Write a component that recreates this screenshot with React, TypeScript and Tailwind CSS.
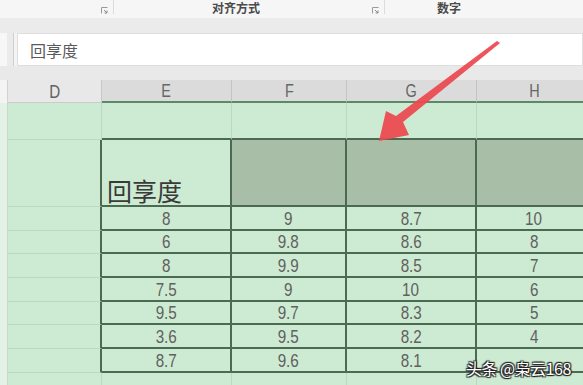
import React from "react";

const data: string[][] = [
  ["8", "9", "8.7", "10"],
  ["6", "9.8", "8.6", "8"],
  ["8", "9.9", "8.5", "7"],
  ["7.5", "9", "10", "6"],
  ["9.5", "9.7", "8.3", "5"],
  ["3.6", "9.5", "8.2", "4"],
  ["8.7", "9.6", "8.1", ""],
];
const heights = ["h-[24px]", "h-[23px]", "h-[24px]", "h-[24px]", "h-[23px]", "h-[24px]", "h-[24px]"];
const widths = ["w-[130px]", "w-[115px]", "w-[130px]", "w-[116px]"];

const font = { fontFamily: '"Liberation Sans", Arial, sans-serif' };
const cjk = { fontFamily: '"Noto Sans CJK SC", "Noto Sans", sans-serif' };

function Launcher() {
  return (
    <svg width="7" height="7" viewBox="0 0 7 7" className="block">
      <path d="M0.5 6.5V0.5H6.5" fill="none" stroke="#9a9a9a" strokeWidth="1" />
      <path d="M3 3L6 6M6 3.5V6H3.5" fill="none" stroke="#8a8a8a" strokeWidth="1" />
    </svg>
  );
}

function LeftStrip() {
  return <div className="w-[8px] shrink-0 bg-[#e4f1e6] border-r border-[#c6dacb]" />;
}

function Num({ v }: { v: string }) {
  return (
    <span className="inline-block scale-x-[0.8] text-[19px] leading-none text-[#606060]" style={font}>
      {v}
    </span>
  );
}

export default function App() {
  return (
    <div className="relative w-[583px] h-[385px] overflow-hidden bg-[#cdebd2]">
      {/* ribbon group labels */}
      <div className="flex h-[18px] bg-[#f6f6f6] overflow-hidden">
        <div className="w-[101px] shrink-0" />
        <div className="pt-[7px] w-[12px] shrink-0"><Launcher /></div>
        <div className="w-px h-[14px] bg-[#dcdcdc] shrink-0" />
        <div className="w-[98px] shrink-0" />
        <div className="pt-px text-[12px] leading-[13px] font-semibold text-[#4a4a4a] w-[160px] shrink-0" style={cjk}>对齐方式</div>
        <div className="pt-[7px] w-[12px] shrink-0"><Launcher /></div>
        <div className="w-px h-[14px] bg-[#dcdcdc] shrink-0" />
        <div className="w-[52px] shrink-0" />
        <div className="pt-px text-[12px] leading-[13px] font-semibold text-[#4a4a4a]" style={cjk}>数字</div>
      </div>
      {/* gray band */}
      <div className="h-[15px] bg-[#ebebeb]" />
      {/* formula bar */}
      <div className="flex h-[33px] bg-[#ebebeb]">
        <div className="w-[7px] shrink-0 bg-[#f7f7f7]" />
        <div className="w-[6px] shrink-0" />
        <div className="w-px shrink-0 bg-[#cfcfcf]" />
        <div className="w-[3px] shrink-0 bg-[#f4f4f4]" />
        <div className="flex-1 flex items-center bg-white border border-[#dedede] pl-[12px]">
          <span className="text-[16px] text-[#5a5a5a]" style={cjk}>回享度</span>
        </div>
      </div>
      <div className="h-[14px] bg-[#e9e9e9]" />
      {/* column header row */}
      <div className="flex h-[23px]">
        <div className="w-[8px] shrink-0 bg-[#f4f4f4] border-r border-[#d2d2d2]" />
        <div className="w-[94px] shrink-0 flex items-center justify-center bg-[#e8e8e8] border-r border-r-[#c8c8c8] border-b border-b-[#cbcbcb]">
          <Num v="D" />
        </div>
        {["E", "F", "G", "H"].map((l, i) => (
          <div
            key={l}
            className={`${widths[i]} shrink-0 flex items-center justify-center bg-[#dbdbdb] border-r border-r-[#c4c4c4] border-b-2 border-b-[#5b8b64]`}
          >
            <span className="inline-block scale-x-[0.8] text-[18px] leading-none text-[#666]" style={font}>{l}</span>
          </div>
        ))}
      </div>
      {/* row 1 */}
      <div className="flex h-[37px]">
        <LeftStrip />
        <div className="w-[94px] shrink-0 border-r border-r-[#b9d9c0] border-b border-b-[#b9d9c0]" />
        {widths.map((w, i) => (
          <div key={i} className={`${w} shrink-0 border-r border-r-[#b9d9c0] border-b-2 border-b-[#4b6a51]`} />
        ))}
      </div>
      {/* header cell row */}
      <div className="flex h-[67px]">
        <LeftStrip />
        <div className="w-[94px] shrink-0 border-r-2 border-r-[#4b6a51] border-b border-b-[#b9d9c0]" />
        <div className="w-[130px] shrink-0 flex items-end pl-[5px] border-r-2 border-r-[#4b6a51] border-b-2 border-b-[#4b6a51]">
          <span className="text-[25px] leading-[30px] text-[#3a3a3a]" style={cjk}>回享度</span>
        </div>
        {[1, 2, 3].map((i) => (
          <div key={i} className={`${widths[i]} shrink-0 bg-[#a8bea6] border-r-2 border-r-[#4b6a51] border-b-2 border-b-[#4b6a51]`} />
        ))}
      </div>
      {/* data rows */}
      {data.map((row, r) => (
        <div key={r} className={`flex ${heights[r]}`}>
          <LeftStrip />
          <div className="w-[94px] shrink-0 border-r-2 border-r-[#4b6a51] border-b border-b-[#b9d9c0]" />
          {row.map((v, i) => (
            <div
              key={i}
              className={`${widths[i]} shrink-0 flex items-center justify-center border-r-2 border-r-[#4b6a51] border-b-2 border-b-[#4b6a51]`}
            >
              <Num v={v} />
            </div>
          ))}
        </div>
      ))}
      {/* trailing row */}
      <div className="flex h-[20px]">
        <LeftStrip />
        <div className="w-[94px] shrink-0 border-r border-r-[#b9d9c0]" />
        {widths.map((w, i) => (
          <div key={i} className={`${w} shrink-0 border-r border-r-[#b9d9c0]`} />
        ))}
      </div>

      {/* red arrow */}
      <svg className="absolute inset-0 pointer-events-none" width="583" height="385" viewBox="0 0 583 385">
        <polygon
          points="497,41 500,43 403,122 409,135 379,141 386,111 396,116"
          fill="#ec4850"
          opacity="0.93"
        />
      </svg>

      {/* watermark */}
      <div
        className="absolute left-[466px] top-[358px] text-[16px] leading-[20px] text-white tracking-[-0.5px] whitespace-nowrap [text-shadow:0_0_1px_#222,1px_1px_1px_#222,-1px_-1px_1px_#222,1px_-1px_1px_#222,-1px_1px_1px_#222]"
        style={cjk}
      >
        头条 @枭云168
      </div>
    </div>
  );
}
